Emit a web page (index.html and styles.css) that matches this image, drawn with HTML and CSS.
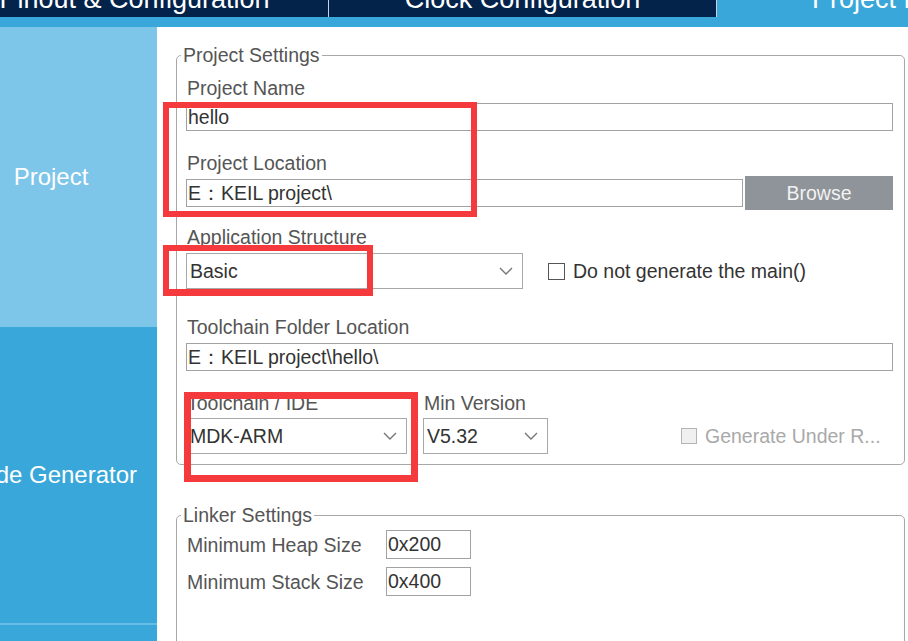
FILE: index.html
```html
<!DOCTYPE html>
<html lang="en">
<head>
<meta charset="utf-8">
<title>Project Manager</title>
<link rel="stylesheet" href="styles.css">
</head>
<body>
<div class="app">
  <div class="tabs">
    <div class="tab"><span>Pinout &amp; Configuration</span></div>
    <div class="tab"><span>Clock Configuration</span></div>
    <div class="tab tab-active"><span>Project Manager</span></div>
  </div>
  <div class="strip"></div>
  <div class="body">
    <nav class="sidebar">
      <div class="nav-item nav-project"><span>Project</span></div>
      <div class="nav-item nav-code"><span>Code Generator</span></div>
      <div class="nav-item nav-adv"><span>Advanced Settings</span></div>
    </nav>
    <main class="main">
      <fieldset class="group group-project">
        <legend>Project Settings</legend>
        <div class="label">Project Name</div>
        <div class="input input-full">hello</div>

        <div class="label label-gap">Project Location</div>
        <div class="row-browse">
          <div class="input input-loc">E：KEIL project\</div>
          <div class="btn">Browse</div>
        </div>

        <div class="label label-app">Application Structure</div>
        <div class="row-app">
          <div class="select select-app"><span>Basic</span>
            <svg class="chev" width="14" height="8" viewBox="0 0 14 8"><polyline points="1,1 7,7 13,1"/></svg>
          </div>
          <div class="check"></div>
          <div class="check-text">Do not generate the main()</div>
        </div>

        <div class="label label-tf">Toolchain Folder Location</div>
        <div class="input input-full input-tf">E：KEIL project\hello\</div>

        <div class="row-tool">
          <div class="col col-ide">
            <div class="label">Toolchain / IDE</div>
            <div class="select"><span>MDK-ARM</span>
              <svg class="chev" width="14" height="8" viewBox="0 0 14 8"><polyline points="1,1 7,7 13,1"/></svg>
            </div>
          </div>
          <div class="col col-ver">
            <div class="label">Min Version</div>
            <div class="select"><span>V5.32</span>
              <svg class="chev" width="14" height="8" viewBox="0 0 14 8"><polyline points="1,1 7,7 13,1"/></svg>
            </div>
          </div>
          <div class="gen-under">
            <div class="check check-disabled"></div>
            <div class="check-text text-disabled">Generate Under R...</div>
          </div>
        </div>
      </fieldset>

      <fieldset class="group group-linker">
        <legend>Linker Settings</legend>
        <div class="linker-row">
          <div class="label linker-label">Minimum Heap Size</div>
          <div class="input input-small">0x200</div>
        </div>
        <div class="linker-row">
          <div class="label linker-label">Minimum Stack Size</div>
          <div class="input input-small">0x400</div>
        </div>
      </fieldset>
    </main>
  </div>

  <div class="mark mark-1"></div>
  <div class="mark mark-2"></div>
  <div class="mark mark-3"></div>
</div>
</body>
</html>
```

FILE: styles.css
```css
* { box-sizing: border-box; }

html, body {
  margin: 0;
  padding: 0;
}

body {
  width: 908px;
  height: 641px;
  overflow: hidden;
  font-family: "Liberation Sans", Arial, sans-serif;
  background: #ffffff;
}

.app {
  position: relative;
  width: 908px;
  height: 641px;
  overflow: hidden;
}

/* top tabs */
.tabs {
  display: flex;
  height: 17px;
  margin-left: -59px;
  background: #03234b;
  overflow: hidden;
}

.tab {
  flex: 0 0 388px;
  border-right: 1px solid #c9d2dc;
  background: #03234b;
  color: #ffffff;
  overflow: hidden;
}

.tab span {
  display: block;
  font-size: 27px;
  line-height: 27px;
  margin-top: -14px;
  text-align: center;
  white-space: nowrap;
}

.tab-active {
  background: #39a7d9;
  border-right: none;
}

.strip {
  height: 10px;
  background: #39a7d9;
}

/* body */
.body {
  display: flex;
  height: 614px;
}

.sidebar {
  flex: 0 0 157px;
  display: flex;
  flex-direction: column;
  overflow: hidden;
  background: #39a7d9;
}

.nav-item {
  display: flex;
  align-items: center;
  justify-content: center;
  padding-right: 55px;
  color: #ffffff;
  font-size: 24px;
  white-space: nowrap;
  flex-shrink: 0;
}

.nav-project {
  height: 300px;
  background: #7dc5e9;
}

.nav-code {
  height: 298px;
  background: #39a7d9;
  border-bottom: 2px solid #66bde6;
}

.nav-adv {
  height: 300px;
  background: #39a7d9;
}

.main {
  flex: 1;
  background: #ffffff;
  padding: 17px 3px 0 19px;
  color: #555555;
  font-size: 19.5px;
}

/* fieldsets */
.group {
  margin: 0;
  border: 1px solid #a8a8a8;
  border-radius: 5px;
  padding: 11px 11px 10px 9px;
  min-width: 0;
}

.group legend {
  padding: 0 2px;
  margin-left: -5px;
  line-height: 22px;
  font-size: 19.5px;
  color: #555555;
}

.group-linker {
  margin-top: 39px;
  height: 200px;
  padding-top: 4px;
}

.label {
  line-height: 22px;
  padding-left: 1px;
  color: #555555;
  white-space: nowrap;
}

.label-gap { margin-top: 21px; }
.label-app { margin-top: 16px; }
.label-tf { margin-top: 27px; }

.input {
  height: 28px;
  border: 1px solid #a2a2a2;
  padding: 0 1px;
  line-height: 26px;
  color: #333333;
  background: #ffffff;
  white-space: nowrap;
  overflow: hidden;
}

.input-full { margin-top: 4px; }
.input-tf { margin-top: 5px; }

.row-browse {
  display: flex;
  align-items: center;
  gap: 2px;
  margin-top: 2px;
  height: 34px;
}

.input-loc {
  flex: 0 0 557px;
}

.btn {
  flex: 1;
  height: 34px;
  background: #8e9499;
  color: #f2f2f2;
  display: flex;
  align-items: center;
  justify-content: center;
}

.select {
  height: 36px;
  border: 1px solid #a8a8a8;
  display: flex;
  align-items: center;
  justify-content: space-between;
  padding: 0 9px 0 3px;
  color: #333333;
  background: #ffffff;
}

.chev polyline {
  fill: none;
  stroke: #767676;
  stroke-width: 1.4;
}

.row-app {
  display: flex;
  align-items: center;
  margin-top: 5px;
}

.select-app {
  flex: 0 0 337px;
}

.check {
  width: 17px;
  height: 17px;
  border: 1.5px solid #555555;
  background: #ffffff;
  margin-left: 25px;
  flex-shrink: 0;
}

.check-text {
  margin-left: 8px;
  color: #333333;
  white-space: nowrap;
}

.row-tool {
  display: flex;
  align-items: flex-end;
  margin-top: 21px;
}

.col .select { margin-top: 4px; }

.col-ide { flex: 0 0 221px; }
.col-ver { flex: 0 0 125px; margin-left: 16px; }

.gen-under {
  display: flex;
  align-items: center;
  height: 36px;
  margin-left: 133px;
}

.gen-under .check { margin-left: 0; }

.check-disabled {
  border: 1px solid #b4b4b4;
  background: #f0f0f0;
  width: 16px;
  height: 16px;
}

.text-disabled {
  color: #a9a9a9;
}

.linker-row {
  display: flex;
  align-items: center;
  height: 29px;
  margin-bottom: 8px;
}

.linker-label {
  flex: 0 0 200px;
}

.input-small {
  flex: 0 0 85px;
  height: 29px;
  line-height: 27px;
}

/* red annotation boxes */
.mark {
  position: absolute;
  border: 6px solid #f43a3d;
}

.mark-1 { left: 163px; top: 102px; width: 314px; height: 115px; }
.mark-2 { left: 163px; top: 245px; width: 210px; height: 51px; border-width: 6px 6px 7px 6px; }
.mark-3 { left: 184px; top: 392px; width: 234px; height: 90px; border-width: 7px; }
```
